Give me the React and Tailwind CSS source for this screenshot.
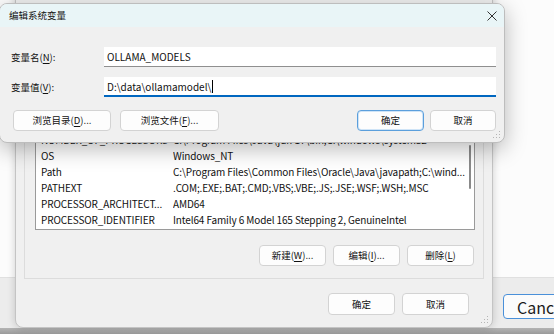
import React from "react";

const FONT = { fontFamily: '"Noto Sans CJK SC", "Noto Sans", sans-serif' };

function Btn({ children, className = "", primary = false }) {
  return (
    <div
      className={
        "flex items-center justify-center rounded-[4px] bg-[#fdfdfd] text-[9.5px] text-[#111] " +
        (primary ? "border border-[#5b9fdc] shadow-[inset_0_0_0_1px_#cfe4f7] " : "border border-[#d3d3d3] ") +
        className
      }
    >
      {children}
    </div>
  );
}

function U({ children }) {
  return <span className="underline underline-offset-2">{children}</span>;
}

const rows = [
  ["NUMBER_OF_PROCESSORS", "C:\\Program Files\\Java\\jdk-17\\bin;C:\\windows\\system32"],
  ["OS", "Windows_NT"],
  ["Path", "C:\\Program Files\\Common Files\\Oracle\\Java\\javapath;C:\\wind..."],
  ["PATHEXT", ".COM;.EXE;.BAT;.CMD;.VBS;.VBE;.JS;.JSE;.WSF;.WSH;.MSC"],
  ["PROCESSOR_ARCHITECT...", "AMD64"],
  ["PROCESSOR_IDENTIFIER", "Intel64 Family 6 Model 165 Stepping 2, GenuineIntel"],
];

function Grip() {
  return (
    <svg width="8" height="8" viewBox="0 0 8 8" className="absolute right-[3px] bottom-[3px]">
      <rect x="6" y="0" width="1" height="1" fill="#b5b5b5" />
      <rect x="3" y="3" width="1" height="1" fill="#b5b5b5" />
      <rect x="6" y="3" width="1" height="1" fill="#b5b5b5" />
      <rect x="0" y="6" width="1" height="1" fill="#b5b5b5" />
      <rect x="3" y="6" width="1" height="1" fill="#b5b5b5" />
      <rect x="6" y="6" width="1" height="1" fill="#b5b5b5" />
    </svg>
  );
}

export default function App() {
  return (
    <div className="relative w-[554px] h-[334px] overflow-hidden bg-[#f3f3f3]" style={FONT}>
      {/* far back window */}
      <div className="absolute inset-0 flex flex-col">
        <div className="h-[277px] bg-[#fcfcfc]" />
        <div className="flex-1 border-t border-[#e0e0e0] bg-[#ececec] relative">
          <div className="absolute left-[503px] top-[16px] w-[90px] h-[25px] rounded-[4px] border border-[#4a90d9] bg-[#fbfbfb] flex items-center pl-[13px] text-[16px] text-[#1b1b1b]">
            Cancel
          </div>
        </div>
        <div className="h-[6px] bg-gradient-to-b from-[#b4b4b4] to-[#9a9a9a]" />
      </div>

      {/* middle window */}
      <div className="absolute left-[15px] top-[-60px] w-[478px] h-[388px] rounded-b-[8px] border border-[#c4c4c4] bg-[#f0f0f0] shadow-[0_0_8px_rgba(0,0,0,0.18)] flex flex-col justify-end">
        <div className="mx-[8px] border border-[#dcdcdc] flex flex-col pl-[10px] pr-[8px] pb-[12px]">
          <div className="border border-[#9a9a9a] bg-white flex pb-[2px] relative">
            <div className="flex-1 min-w-0 flex flex-col">
              {rows.map(([a, b]) => (
                <div key={a} className="h-[16px] flex items-center text-[10px] tracking-[-0.12px] text-[#111] whitespace-nowrap overflow-hidden">
                  <div className="w-[137px] pl-[5px] shrink-0 overflow-hidden">{a}</div>
                  <div className="flex-1 min-w-0 overflow-hidden">{b}</div>
                </div>
              ))}
            </div>
            <div className="w-[8px] shrink-0 flex justify-center pt-[14px]">
              <div className="w-[2px] h-[44px] rounded bg-[#8a8a8a]" />
            </div>
          </div>
          <div className="flex justify-end gap-[7px] mt-[15px] pr-[1px]">
            <Btn className="w-[67px] h-[21px]">新建(<U>W</U>)...</Btn>
            <Btn className="w-[67px] h-[21px]">编辑(<U>I</U>)...</Btn>
            <Btn className="w-[67px] h-[21px]">删除(<U>L</U>)</Btn>
          </div>
        </div>
        <div className="flex justify-end gap-[7px] pr-[23px] pt-[14px] pb-[12px]">
          <Btn className="w-[67px] h-[22px]">确定</Btn>
          <Btn className="w-[67px] h-[22px]">取消</Btn>
        </div>
        <Grip />
      </div>

      {/* top dialog */}
      <div className="absolute left-[-1px] top-[3px] w-[506px] h-[140px] rounded-[8px] border border-[#bdbdbd] bg-[#f0f0f0] shadow-[0_6px_22px_rgba(0,0,0,0.28)] flex flex-col overflow-hidden">
        <div className="h-[23px] bg-[#e9f5f7] flex items-center justify-between pl-[9px] pr-[4px] shrink-0">
          <span className="text-[9.5px] text-[#111]">编辑系统变量</span>
          <svg width="12" height="12" viewBox="0 0 12 12" className="mr-[2px]">
            <path d="M1.5 1.5 L10.5 10.5 M10.5 1.5 L1.5 10.5" stroke="#333" strokeWidth="1" />
          </svg>
        </div>
        <div className="flex-1 flex flex-col pt-[20px] pl-[11px] pr-[8px] relative">
          <div className="flex items-center h-[20px]">
            <div className="w-[93px] text-[9.5px] text-[#111]">变量名(<U>N</U>):</div>
            <div className="flex-1 h-[20px] bg-white border-b border-[#8f8f8f] flex items-center pl-[3px] text-[10px] text-[#111]">
              OLLAMA_MODELS
            </div>
          </div>
          <div className="flex items-center h-[20px] mt-[10px]">
            <div className="w-[93px] text-[9.5px] text-[#111]">变量值(<U>V</U>):</div>
            <div className="flex-1 h-[20px] bg-white border-b-2 border-[#0067c0] flex items-center pl-[3px] text-[10px] text-[#111]">
              D:\data\ollamamodel\
              <span className="w-[1px] h-[13px] bg-black ml-[1px]" />
            </div>
          </div>
          <div className="flex items-center mt-[13px] h-[20px]">
            <Btn className="w-[98px] h-[21px] ml-[2px]">浏览目录(<U>D</U>)...</Btn>
            <Btn className="w-[99px] h-[21px] ml-[9px]">浏览文件(<U>F</U>)...</Btn>
            <div className="flex-1" />
            <Btn primary className="w-[67px] h-[21px]">确定</Btn>
            <Btn className="w-[66px] h-[21px] ml-[6px]">取消</Btn>
          </div>
          <Grip />
        </div>
      </div>
    </div>
  );
}
